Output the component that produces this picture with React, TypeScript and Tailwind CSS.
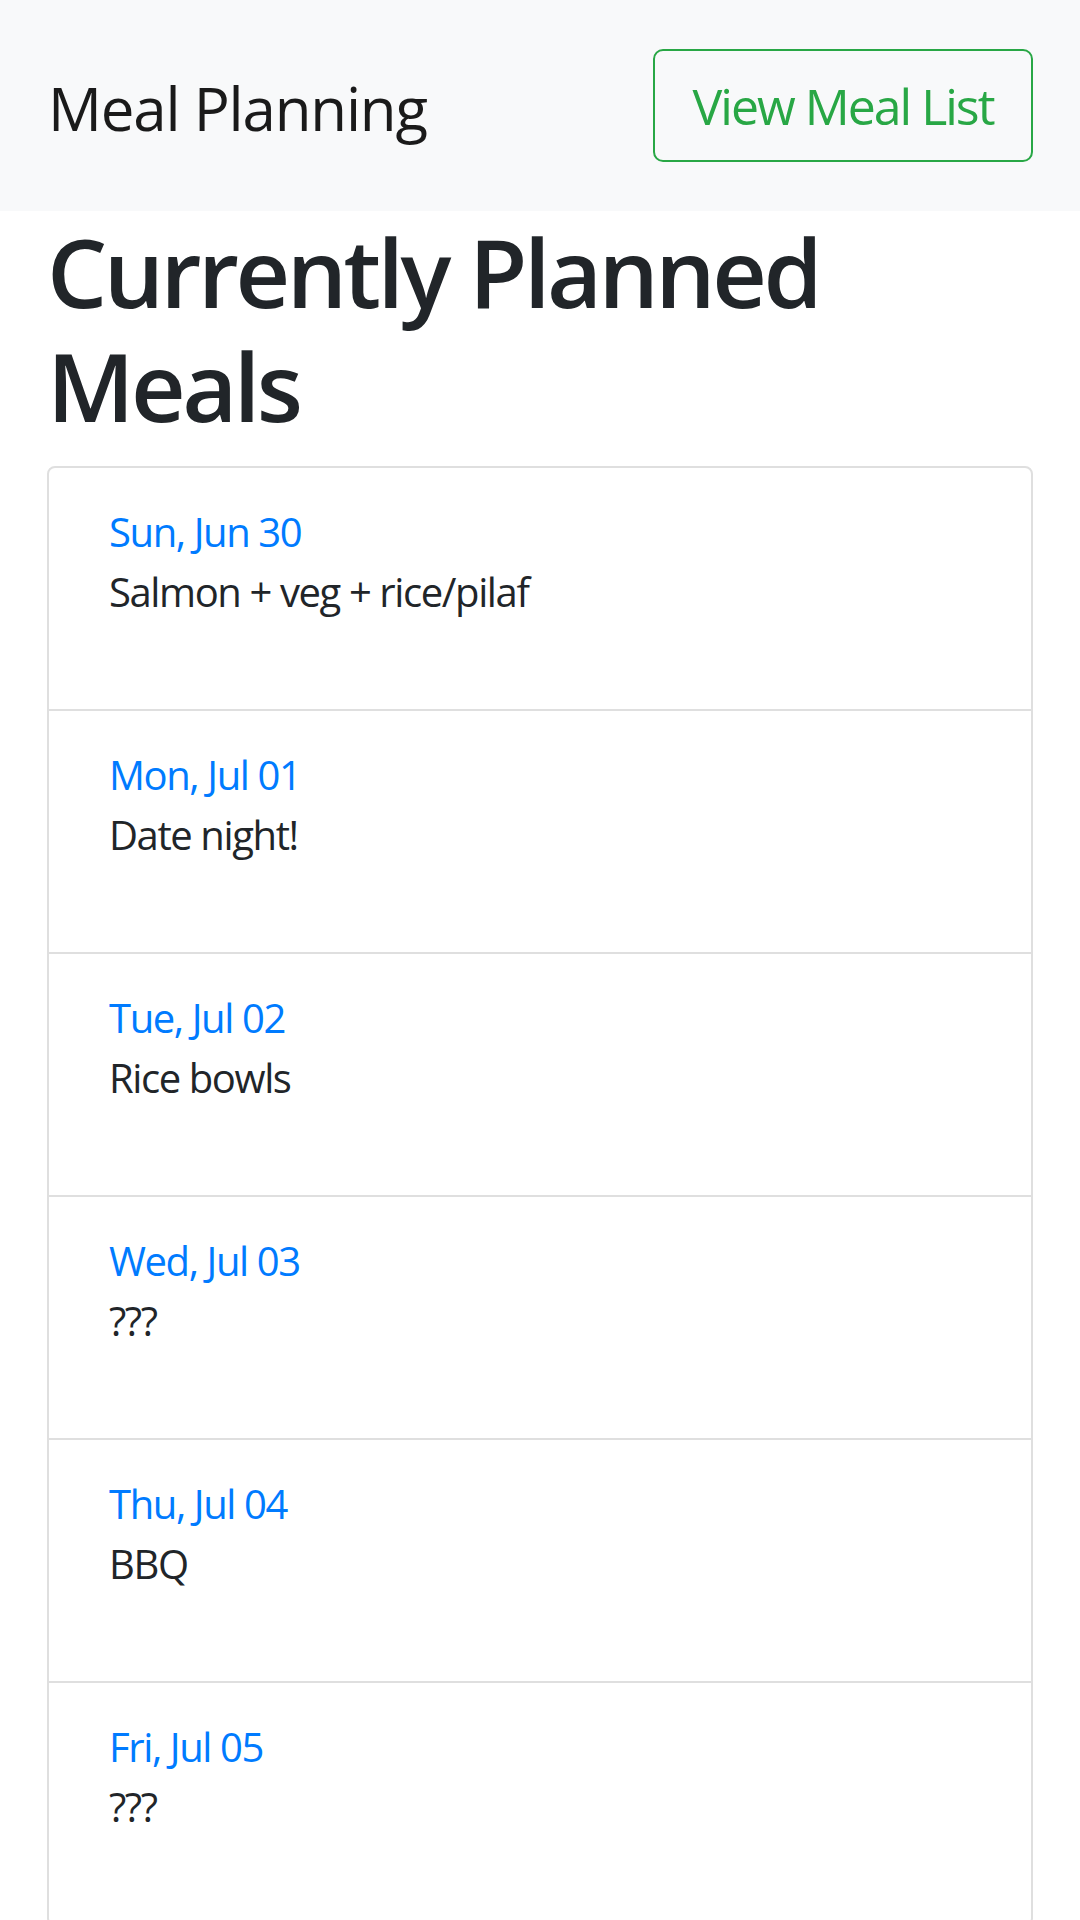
import React from "react";

const meals = [
  { date: "Sun, Jun 30", meal: "Salmon + veg + rice/pilaf" },
  { date: "Mon, Jul 01", meal: "Date night!" },
  { date: "Tue, Jul 02", meal: "Rice bowls" },
  { date: "Wed, Jul 03", meal: "???" },
  { date: "Thu, Jul 04", meal: "BBQ" },
  { date: "Fri, Jul 05", meal: "???" },
];

export default function App() {
  return (
    <div className="h-[1920px] overflow-hidden bg-white font-['Open_Sans',sans-serif] text-[#212529]">
      <header className="flex h-[211px] items-center justify-between bg-[#f8f9fa] pl-[48px] pr-[47px]">
        <span className="mt-[4px] text-[60px] leading-[72px] tracking-[-0.02em] text-[#1a1a1a]">Meal Planning</span>
        <button className="flex h-[113px] w-[380px] items-center justify-center rounded-[10px] border-2 border-[#28a745] text-[50px] leading-[60px] tracking-[-0.04em] text-[#28a745]">
          View Meal List
        </button>
      </header>
      <main className="px-[47px]">
        <h1 className="mt-[3px] text-[95px] font-semibold leading-[114px] tracking-[-0.037em] text-[#212529]">
          Currently Planned Meals
        </h1>
        <div className="mt-[24px] overflow-hidden rounded-[8px] border-2 border-[#dfdfdf]">
          {meals.map((m, i) => (
            <div
              key={i}
              className={`${i > 0 ? "border-t-2 border-[#dfdfdf]" : ""} pl-[60px] pr-[40px] pt-[34px] pb-[87px]`}
            >
              <div className="text-[40px] leading-[60px] tracking-[-0.035em] text-[#007bff]">{m.date}</div>
              <div className="text-[40px] leading-[60px] tracking-[-0.035em] text-[#212529]">{m.meal}</div>
            </div>
          ))}
        </div>
      </main>
    </div>
  );
}
